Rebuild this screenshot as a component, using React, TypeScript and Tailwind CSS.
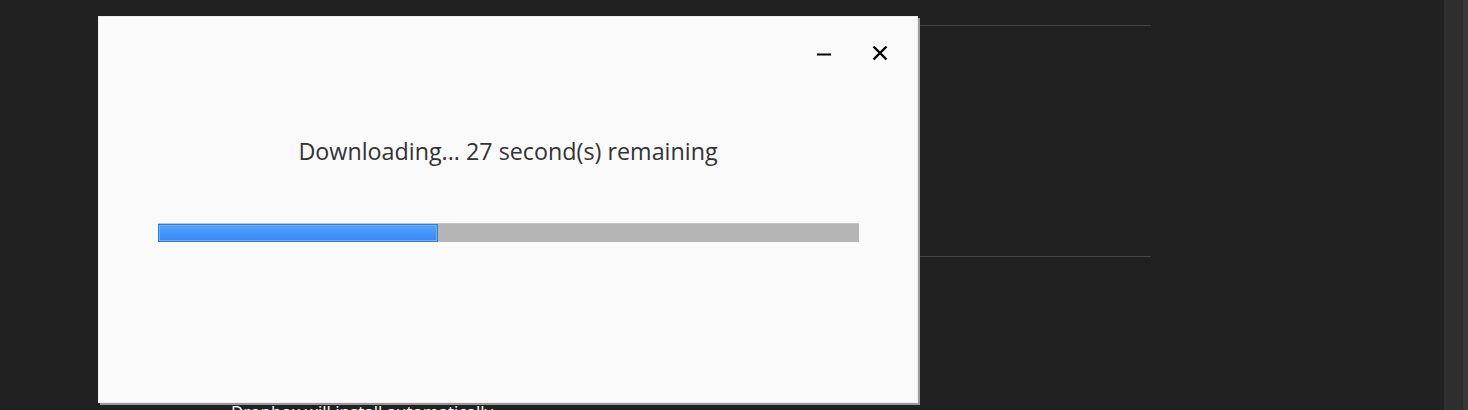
import React from "react";

const progress = 0.4;

const InstallerDialog: React.FC = () => {
    return (
        <div className="absolute left-[98px] top-[16px] w-[820px] h-[387px] bg-[#fafafa] border border-[#f0f0f0] shadow-[2px_2px_0_#9a9a9a] flex flex-col">
            <div className="flex justify-end items-center gap-[40px] pt-[20px] pr-[29px] h-[51px]">
                <svg width="16" height="16" viewBox="0 0 16 16" className="text-black">
                    <path d="M1 9.5h14" stroke="currentColor" strokeWidth="2" />
                </svg>
                <svg width="16" height="16" viewBox="0 0 16 16" className="text-black">
                    <path d="M1.5 1.5l13 13M14.5 1.5l-13 13" stroke="currentColor" strokeWidth="2.4" />
                </svg>
            </div>
            <p className="mt-[68px] text-center text-[23.3px] leading-[30px] text-[#333333] font-['Open_Sans',sans-serif]">
                Downloading... 27 second(s) remaining
            </p>
            <div className="mt-[57px] ml-[59px] w-[701px] h-[19px] bg-[#b5b5b5] border-t border-[#c4c4c4]">
                <div
                    className="h-full bg-gradient-to-b from-[#51a5ff] to-[#3a86f4] border border-[#2f7ae6] shadow-[inset_0_0_0_1px_#6fb3ff]"
                    style={{ width: `${progress * 100}%` }}
                />
            </div>
        </div>
    );
};

export default function App() {
    return (
        <div className="relative w-[1468px] h-[410px] overflow-hidden bg-[#212121] flex">
            <div className="flex-1 pl-[200px] pt-[25px] pr-[293px]">
                <div className="border-t border-[#444444]" />
                <div className="mt-[230px] border-t border-[#444444]" />
                <p className="mt-[142px] pl-[31px] text-white text-[17px] font-['Open_Sans',sans-serif]">
                    Dropbox will install automatically
                </p>
            </div>
            <div className="w-[19px] h-full bg-[#2e2e2e]" />
            <div className="w-[5px] h-full bg-[#383838]" />
            <InstallerDialog />
        </div>
    );
}
